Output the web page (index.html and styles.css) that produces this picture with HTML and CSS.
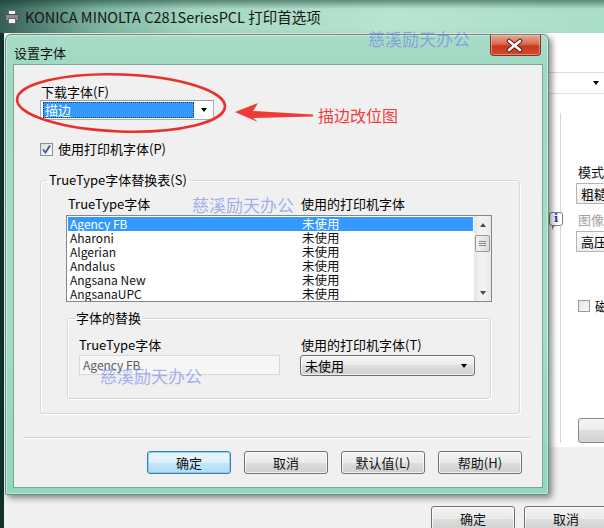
FILE: index.html
```html
<!DOCTYPE html>
<html>
<head>
<meta charset="utf-8">
<link rel="stylesheet" href="styles.css">
</head>
<body>
<div class="screen">
  <div class="backwin">
    <div class="bw-title">
      <svg class="printer" width="14" height="16" viewBox="0 0 14 16">
        <rect x="3.5" y="1.5" width="7" height="5" fill="#f4f4f4" stroke="#6a6a6a"/>
        <rect x="0.5" y="5.5" width="13" height="6" rx="1" fill="#8d8d8d" stroke="#4a4a4a"/>
        <rect x="3.5" y="9.5" width="7" height="5" fill="#f4f4f4" stroke="#6a6a6a"/>
      </svg>
      <span class="bw-title-text">KONICA MINOLTA C281SeriesPCL 打印首选项</span>
    </div>
    <div class="bw-client">
      <div class="bw-main">
        <div class="bw-panel">
          <div class="bwp-top"></div>
          <div class="bwp-combo"><span class="tri"></span></div>
          <div class="bwp-sec">
            <span class="info-icon"><span class="info-i">i</span></span>
            <div class="bwp-lbl">模式</div>
            <div class="bwp-box">粗糙</div>
            <div class="bwp-lbl dim">图像</div>
            <div class="bwp-box">高压</div>
            <div class="bwp-chk"><span class="cb"></span><span>磁</span></div>
            <div class="bwp-btn"></div>
          </div>
        </div>
      </div>
      <div class="bw-foot">
        <button class="btn">确定</button>
        <button class="btn">取消</button>
      </div>
    </div>
  </div>

  <div class="dialog">
    <div class="dlg-title">
      <span class="dlg-title-text">设置字体</span>
      <span class="close-btn">
        <svg width="51" height="21" viewBox="0 0 51 21">
          <path d="M20 6 L31 15 M31 6 L20 15" stroke="#5a1c10" stroke-width="4.5" stroke-linecap="round"/>
          <path d="M20 6 L31 15 M31 6 L20 15" stroke="#ffffff" stroke-width="2.6" stroke-linecap="round"/>
        </svg>
      </span>
    </div>
    <div class="client">
      <div class="lbl">下载字体(F)</div>
      <div class="dl-combo">
        <span class="dl-sel">描边</span>
        <span class="arrow"></span>
      </div>
      <div class="chk-row">
        <span class="cb">
          <svg width="11" height="11" viewBox="0 0 11 11"><path d="M2 5.5 L4.5 8.5 L9 1.5" fill="none" stroke="#3f5891" stroke-width="1.8"/></svg>
        </span>
        <span>使用打印机字体(P)</span>
      </div>
      <fieldset class="grp outer">
        <legend>TrueType字体替换表(S)</legend>
        <div class="outer-body">
          <div class="cols-hdr"><span>TrueType字体</span><span>使用的打印机字体</span></div>
          <div class="listbox">
            <div class="rows">
              <div class="row sel"><span>Agency FB</span><span>未使用</span></div>
              <div class="row"><span>Aharoni</span><span>未使用</span></div>
              <div class="row"><span>Algerian</span><span>未使用</span></div>
              <div class="row"><span>Andalus</span><span>未使用</span></div>
              <div class="row"><span>Angsana New</span><span>未使用</span></div>
              <div class="row"><span>AngsanaUPC</span><span>未使用</span></div>
            </div>
            <div class="vscroll">
              <span class="sb-btn"><span class="sb-up"></span></span>
              <span class="sb-thumb"><span class="grip"></span></span>
              <span class="sb-track"></span>
              <span class="sb-btn"><span class="sb-down"></span></span>
            </div>
          </div>
          <fieldset class="grp inner">
            <legend>字体的替换</legend>
            <div class="rep-grid">
              <span class="rep-lbl">TrueType字体</span>
              <span class="rep-lbl">使用的打印机字体(T)</span>
              <div class="tbox">Agency FB</div>
              <div class="dd"><span>未使用</span><span class="arrow"></span></div>
            </div>
          </fieldset>
        </div>
      </fieldset>
      <div class="sep"></div>
      <div class="btn-row">
        <button class="btn default">确定</button>
        <button class="btn">取消</button>
        <button class="btn">默认值(L)</button>
        <button class="btn">帮助(H)</button>
      </div>
    </div>
  </div>

  <svg class="annot" width="604" height="528" viewBox="0 0 604 528">
    <ellipse cx="121" cy="103" rx="104" ry="28.5" transform="rotate(2 121 103)" fill="none" stroke="#e8302c" stroke-width="2.6"/>
    <polygon points="235,112 258,103 253,111 313,114.5 313,116.5 253,118 258,122" fill="#f03a36"/>
  </svg>
  <span class="annot-text">描边改位图</span>
  <span class="wm wm1">慈溪励天办公</span>
  <span class="wm wm2">慈溪励天办公</span>
  <span class="wm wm3">慈溪励天办公</span>
</div>
</body>
</html>
```

FILE: styles.css
```css
* { box-sizing: border-box; }
html, body { margin: 0; padding: 0; }
body {
  width: 604px;
  height: 528px;
  overflow: hidden;
  background: #10302c;
  font-family: "Noto Sans CJK SC", "Noto Sans", sans-serif;
  font-size: 13px;
  color: #000;
}
.screen { position: relative; width: 604px; height: 528px; overflow: hidden; }

/* ---------- background window ---------- */
.backwin { display: flex; flex-direction: column; height: 528px; }
.bw-title {
  height: 33px;
  flex: none;
  display: flex;
  align-items: center;
  gap: 6px;
  padding-left: 5px;
  background:
    linear-gradient(180deg, rgba(10, 50, 40, 0.5) 0, rgba(10, 50, 40, 0) 9px),
    linear-gradient(90deg, #355f55 0, #7cb3a0 16%, #a3d6c1 32%, #b7e4d1 65%, #a9dec8 100%);
}
.printer { flex: none; }
.bw-title-text { font-size: 14.5px; line-height: 18px; color: #161616; white-space: nowrap; }
.bw-client { flex: 1; margin-left: 4px; display: flex; flex-direction: column; background: #f0f0f0; }
.bw-main { height: 414px; flex: none; display: flex; justify-content: flex-end; background: #f4f4f4; }
.bw-panel { width: 56px; background: #ffffff; display: flex; flex-direction: column; }
.bwp-top { height: 40px; border-bottom: 1px solid #dcdcdc; }
.bwp-combo {
  height: 21px;
  border-bottom: 1px solid #e2e2e2;
  display: flex;
  align-items: center;
  justify-content: flex-end;
  padding-right: 5px;
}
.tri { width: 0; height: 0; border-left: 3.5px solid transparent; border-right: 3.5px solid transparent; border-top: 4px solid #000; }
.bwp-sec {
  position: relative;
  margin-top: 19px;
  margin-left: 12px;
  height: 330px;
  border-left: 1px solid #d6d6d6;
  padding-left: 15px;
  display: flex;
  flex-direction: column;
  align-items: flex-start;
}
.bwp-lbl { margin-top: 51px; padding-left: 2px; line-height: 16px; white-space: nowrap; color: #111; }
.bwp-lbl.dim { margin-top: 8px; color: #a2a2a2; }
.bwp-box {
  margin-top: 3px;
  width: 60px;
  height: 21px;
  border: 1px solid #b5b5b5;
  background: linear-gradient(#fbfbfb, #eeeeee);
  padding-left: 4px;
  line-height: 19px;
  white-space: nowrap;
}
.bwp-chk { margin-top: 47px; margin-left: 2px; display: flex; align-items: center; gap: 5px; line-height: 14px; white-space: nowrap; }
.bwp-chk .cb { width: 12px; height: 12px; border: 1px solid #9a9a9a; background: linear-gradient(135deg, #e2e2e2, #fafafa); }
.bwp-btn {
  margin-top: 105px;
  margin-left: 2px;
  width: 60px;
  height: 25px;
  border: 1px solid #8a8a8a;
  border-radius: 3px;
  background: linear-gradient(#f4f4f4 0, #ececec 50%, #dedede 50%, #d2d2d2 100%);
}
.info-icon {
  position: absolute;
  left: -12px;
  top: 99px;
  width: 14px;
  height: 14px;
  border: 1px solid #7d7d7d;
  border-radius: 3px;
  background: #ffffff;
  display: flex;
  align-items: center;
  justify-content: center;
}
.info-icon::after {
  content: "";
  position: absolute;
  left: 2px;
  bottom: -5px;
  border-left: 3px solid #7d7d7d;
  border-bottom: 5px solid transparent;
}
.info-i { font-family: "DejaVu Serif", serif; font-weight: bold; font-size: 11px; line-height: 12px; color: #1d2fc8; }
.bw-foot {
  flex: 1;
  display: flex;
  justify-content: flex-end;
  align-items: flex-start;
  gap: 9px;
  padding-top: 59px;
  margin-right: -4px;
  background: #f0f0f0;
}
.bw-foot .btn { height: 26px; }

/* ---------- dialog ---------- */
.dialog {
  position: absolute;
  left: 5px;
  top: 34px;
  width: 544px;
  height: 461px;
  padding: 0 8px 8px 8px;
  border: 1px solid #5f8d80;
  border-radius: 6px 6px 2px 2px;
  background: linear-gradient(180deg, #a9dcc8 0, #9fd9c2 30px, #a4ddc7 60%, #8fd8bc 100%);
  box-shadow: 3px 3px 6px rgba(0, 0, 0, 0.45), inset 0 0 0 1px rgba(255, 255, 255, 0.45);
  display: flex;
  flex-direction: column;
}
.dlg-title { height: 30px; flex: none; display: flex; justify-content: space-between; align-items: flex-start; }
.dlg-title-text { margin-top: 10px; line-height: 16px; font-size: 13px; color: #111; }
.close-btn {
  margin-top: 0;
  margin-right: -1px;
  width: 51px;
  height: 21px;
  border: 1px solid #7a3526;
  border-top: none;
  border-radius: 0 0 4px 4px;
  background: linear-gradient(180deg, #e9a898 0, #da6a52 45%, #c7381f 55%, #cf4a2e 100%);
  box-shadow: inset 0 0 0 1px rgba(255, 200, 180, 0.5);
  display: flex;
  align-items: center;
  justify-content: center;
}
.close-btn svg { display: block; margin-left: -2px; }
.client {
  width: 528px;
  height: 422px;
  flex: none;
  background: #f0f0f0;
  box-shadow: 0 0 0 1px #7ea597;
  padding: 19px 20px 0 26px;
  display: flex;
  flex-direction: column;
  align-items: flex-start;
}
.lbl { line-height: 15px; padding-left: 1px; }
.dl-combo {
  margin-top: 1px;
  width: 174px;
  height: 20px;
  border: 1px solid #abadb3;
  border-top-color: #9a9ca3;
  background: #ffffff;
  padding: 1px 2px;
  display: flex;
  align-items: center;
}
.dl-sel {
  width: 151px;
  height: 16px;
  background: #3399ff;
  color: #ffffff;
  outline: 1px dotted #1d3d6a;
  outline-offset: -1px;
  padding-left: 2px;
  line-height: 16px;
}
.arrow {
  margin-left: auto;
  margin-right: 4px;
  width: 0;
  height: 0;
  border-left: 3.5px solid transparent;
  border-right: 3.5px solid transparent;
  border-top: 4px solid #000;
}
.chk-row { margin-top: 22px; display: flex; align-items: center; gap: 5px; line-height: 14px; height: 14px; }
.chk-row .cb {
  width: 13px;
  height: 13px;
  border: 1px solid #8e8f8f;
  background: linear-gradient(135deg, #dcdcdc, #fbfbfb);
  display: flex;
  align-items: center;
  justify-content: center;
}
.chk-row .cb svg { display: block; }

.grp {
  margin: 0;
  padding: 0;
  min-width: 0;
  border: 1px solid #d5d9dc;
  border-radius: 3px;
  box-shadow: inset 1px 1px 0 #ffffff, 1px 1px 0 #ffffff;
}
.grp legend { margin-left: 6px; padding: 0 2px; line-height: 16px; font-size: 13px; }
.outer { margin-top: 16px; width: 480px; }
.outer-body { padding: 8px 26px 14px 25px; display: flex; flex-direction: column; align-items: flex-start; }
.cols-hdr { display: grid; grid-template-columns: 233px 1fr; padding-left: 2px; line-height: 16px; width: 426px; }
.listbox {
  margin-top: 3px;
  width: 426px;
  height: 87px;
  border: 1px solid #828790;
  background: #ffffff;
  display: flex;
  overflow: hidden;
}
.rows { width: 407px; padding: 1px; }
.row {
  display: grid;
  grid-template-columns: 232px 1fr;
  height: 14px;
  line-height: 14px;
  font-size: 12px;
  padding-left: 2px;
  white-space: nowrap;
  color: #111;
}
.row span:last-child { font-size: 12.5px; }
.row.sel { background: #3399ff; color: #ffffff; }
.vscroll {
  width: 17px;
  display: flex;
  flex-direction: column;
  background: linear-gradient(90deg, #e4e4e4, #f2f2f2 40%, #f2f2f2 60%, #e8e8e8);
}
.sb-btn { height: 17px; flex: none; display: flex; align-items: center; justify-content: center; }
.sb-up { width: 0; height: 0; border-left: 3.5px solid transparent; border-right: 3.5px solid transparent; border-bottom: 4px solid #4d4d4d; }
.sb-down { width: 0; height: 0; border-left: 3.5px solid transparent; border-right: 3.5px solid transparent; border-top: 4px solid #4d4d4d; }
.sb-thumb {
  margin: 2px 1px 0;
  height: 17px;
  flex: none;
  border: 1px solid #9b9b9b;
  border-radius: 2px;
  background: linear-gradient(90deg, #f3f3f3, #e6e6e6 50%, #d9d9d9);
  display: flex;
  align-items: center;
  justify-content: center;
}
.grip { width: 7px; height: 5px; border-top: 1px solid #8a8a8a; border-bottom: 1px solid #8a8a8a; position: relative; }
.grip::after { content: ""; position: absolute; left: 0; right: 0; top: 1px; border-top: 1px solid #8a8a8a; }
.sb-track { flex: 1; }

.inner { margin-top: 8px; margin-left: 1px; width: 424px; }
.rep-grid {
  display: grid;
  grid-template-columns: 201px 175px;
  column-gap: 20px;
  row-gap: 2px;
  padding: 11px 0 22px 11px;
}
.rep-lbl { line-height: 16px; white-space: nowrap; }
.rep-lbl:nth-child(2) { padding-left: 1px; }
.tbox {
  height: 20px;
  border: 1px solid #d6d8da;
  background: #f6f6f6;
  color: #5e5e5e;
  padding-left: 3px;
  line-height: 18px;
  font-size: 12px;
}
.dd {
  height: 21px;
  border: 1px solid #707070;
  border-radius: 3px;
  background: linear-gradient(#f4f4f4 0, #ebebeb 50%, #dddddd 50%, #d1d1d1 100%);
  box-shadow: inset 0 0 0 1px rgba(255, 255, 255, 0.6);
  display: flex;
  align-items: center;
  padding-left: 4px;
  line-height: 19px;
}
.dd .arrow { margin-right: 7px; }

.sep {
  margin-top: 23px;
  margin-left: -17px;
  width: 508px;
  height: 2px;
  border-top: 1px solid #d0d0d0;
  border-bottom: 1px solid #ffffff;
}
.btn-row { margin-top: 12px; align-self: flex-end; display: flex; gap: 13px; }
.btn {
  font-family: "Noto Sans CJK SC", "Noto Sans", sans-serif;
  font-size: 13px;
  line-height: 20px;
  width: 84px;
  height: 23px;
  padding: 0;
  color: #111;
  border: 1px solid #707070;
  border-radius: 3px;
  background: linear-gradient(#f2f2f2 0, #ebebeb 50%, #dddddd 50%, #cfcfcf 100%);
  box-shadow: inset 0 0 0 1px rgba(255, 255, 255, 0.7);
}
.btn.default {
  border-color: #3c7fb1;
  background: linear-gradient(#eaf6fd 0, #dcf1fc 50%, #c4e6f8 50%, #b2dcf3 100%);
  box-shadow: inset 0 0 0 1px rgba(120, 200, 240, 0.8);
}

/* ---------- overlays ---------- */
.annot { position: absolute; left: 0; top: 0; pointer-events: none; }
.annot-text {
  position: absolute;
  left: 318px;
  top: 106px;
  font-size: 16px;
  line-height: 18px;
  color: #f23c3a;
  white-space: nowrap;
}
.wm {
  position: absolute;
  font-size: 17px;
  line-height: 18px;
  color: rgba(95, 115, 235, 0.55);
  white-space: nowrap;
  pointer-events: none;
}
.wm1 { left: 368px; top: 30px; }
.wm2 { left: 192px; top: 196px; }
.wm3 { left: 100px; top: 367px; }
```
